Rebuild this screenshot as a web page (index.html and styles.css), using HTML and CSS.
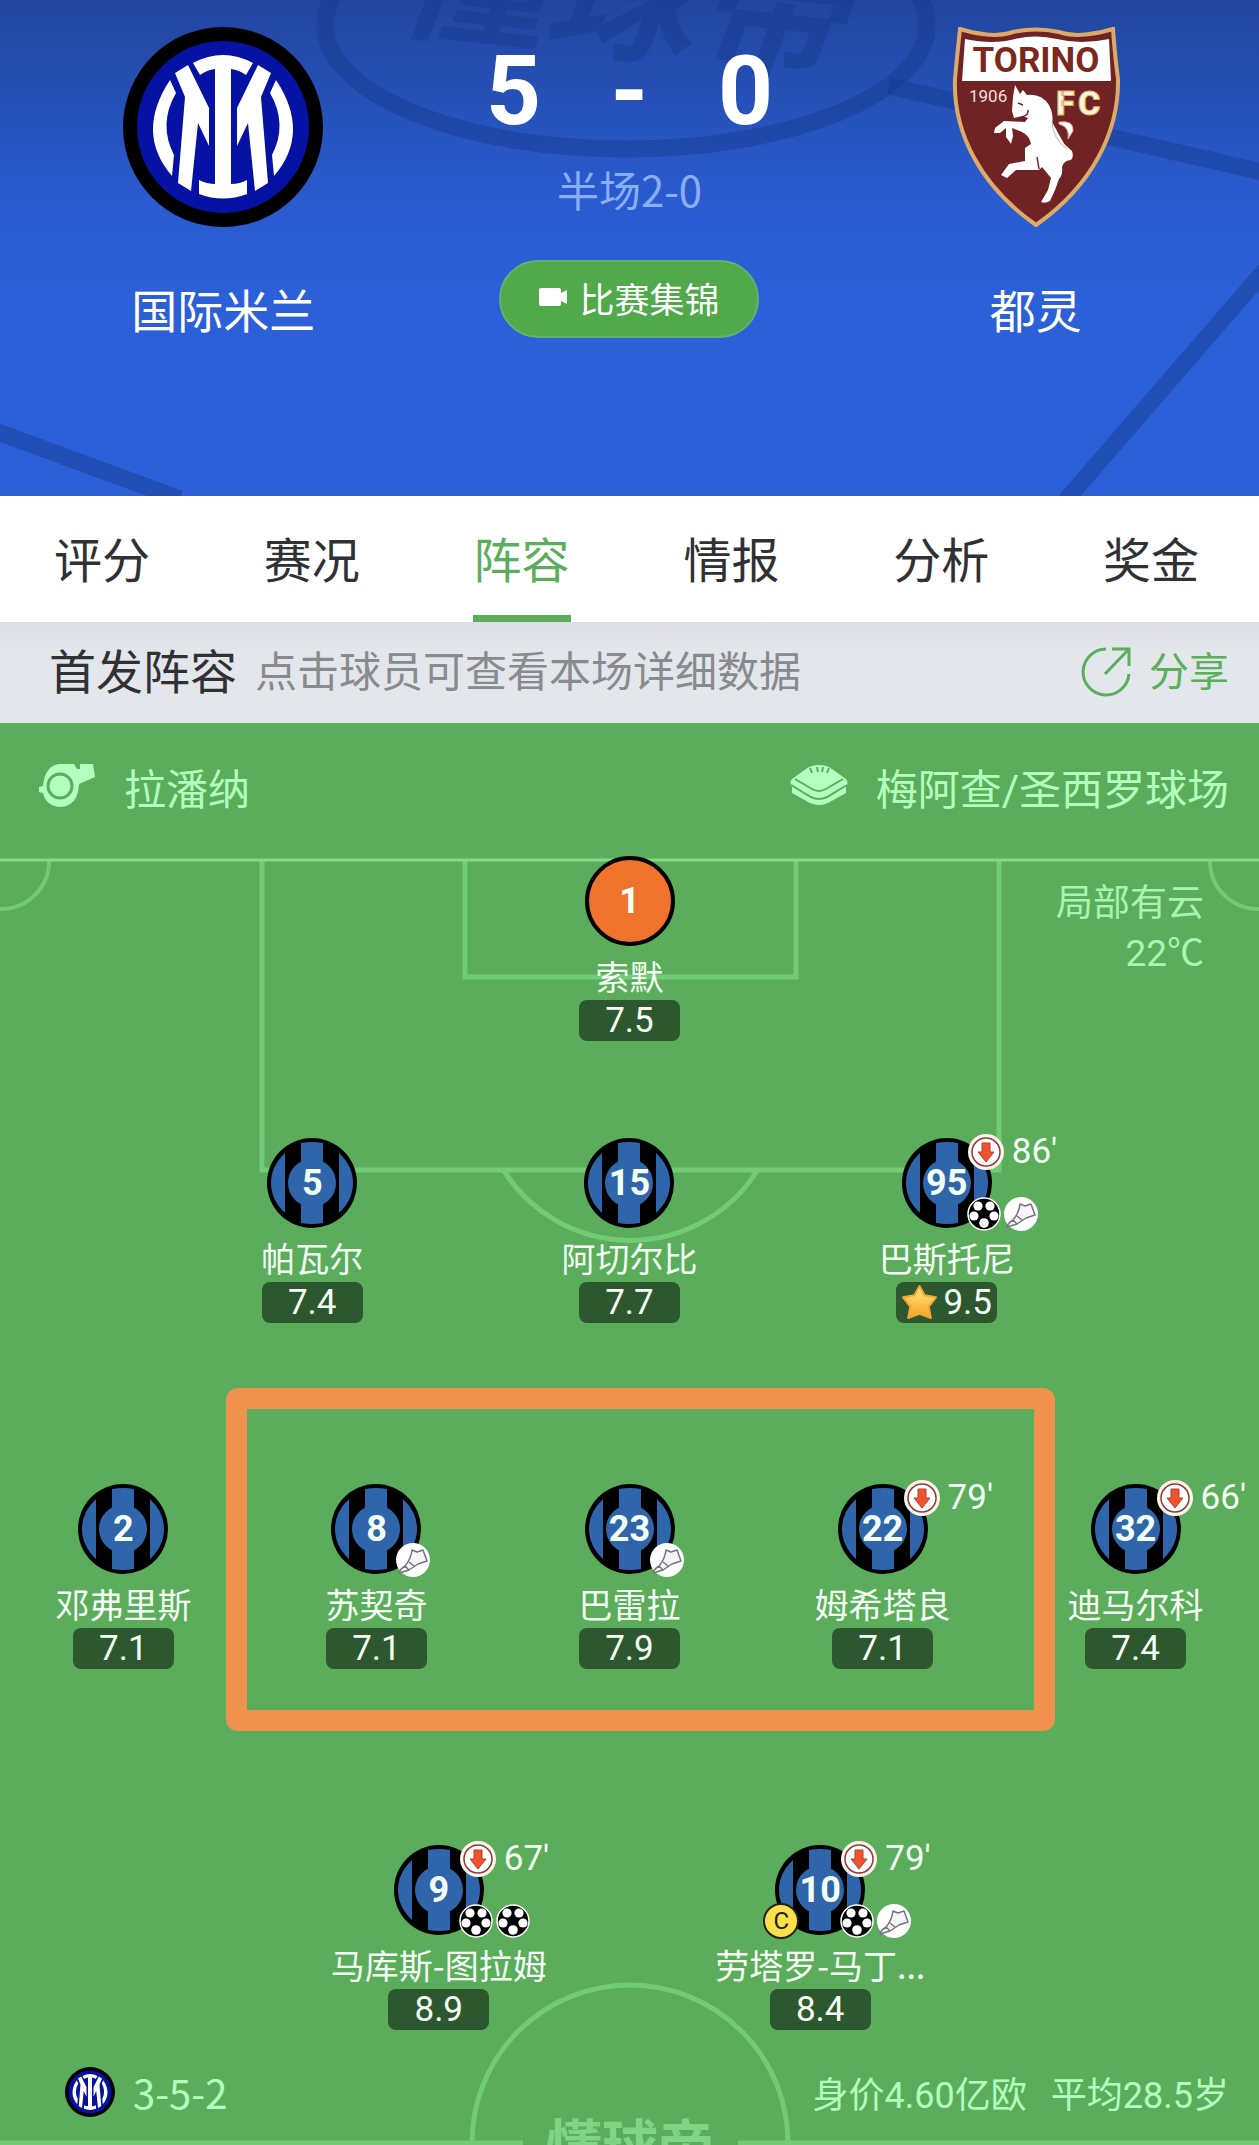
FILE: index.html
```html
<!DOCTYPE html>
<html lang="zh-CN">
<head>
<meta charset="utf-8">
<meta name="viewport" content="width=device-width, initial-scale=1">
<title>国际米兰 5 - 0 都灵</title>
<link rel="stylesheet" href="styles.css">
</head>
<body>
<svg class="sprite" aria-hidden="true">
  <symbol id="inter" viewBox="0 0 200 200">
    <circle cx="100" cy="100" r="100" fill="#000"/>
    <circle cx="100" cy="100" r="86" fill="#0512a4"/>
    <g fill="#fff">
      <path d="M70 36Q100 20 130 36L123 48Q116 43 108 42V157Q117 157 124 153V167Q100 176 76 167V153Q84 157 92 157V42Q84 43 77 48Z"/>
      <path d="M52 46L65 38L86 81V119L75 96L68 164L55 156L62 70Z"/>
      <path d="M47 53L53 66Q35 97 51 128L49 149Q12 106 47 53Z"/>
      <path d="M148 46L135 38L114 81V119L125 96L132 164L145 156L138 70Z"/>
      <path d="M153 53L147 66Q165 97 149 128L151 149Q188 106 153 53Z"/>
    </g>
  </symbol>
  <symbol id="kit" viewBox="0 0 90 90">
    <circle cx="45" cy="45" r="45" fill="#000"/>
    <path d="M18 15V75Q4 62 4 45T18 15ZM72 15V75Q86 62 86 45T72 15ZM34 5Q45 3 56 5V85Q45 87 34 85Z" fill="#2f66ab"/>
    <circle cx="45" cy="45" r="24" fill="#2f66ab"/>
  </symbol>
  <symbol id="kit-gk" viewBox="0 0 90 90">
    <circle cx="45" cy="45" r="43" fill="#f0732c" stroke="#000" stroke-width="4"/>
  </symbol>
  <symbol id="off" viewBox="0 0 36 36">
    <circle cx="18" cy="18" r="18" fill="#fff5ee"/>
    <circle cx="18" cy="18" r="14" fill="#fff" stroke="#8d3a35" stroke-width="1.5"/>
    <path d="M14 9H22V18H26L18 28L10 18H14Z" fill="#f0512f" stroke="#b5402c"/>
  </symbol>
  <symbol id="goal" viewBox="0 0 34 34">
    <circle cx="17" cy="17" r="16" fill="#000" stroke="#fff" stroke-width="1.5"/>
    <g fill="#fff">
      <circle cx="11" cy="9" r="4.6"/><circle cx="23" cy="9" r="4.6"/>
      <circle cx="7" cy="19" r="4.6"/><circle cx="27" cy="19" r="4.6"/>
      <circle cx="17" cy="26" r="4.8"/>
    </g>
  </symbol>
  <symbol id="assist" viewBox="0 0 34 34">
    <circle cx="17" cy="17" r="17" fill="#fff"/>
    <path d="M16 7L21 9L27 7L31 18L22 21L13 27L3 30Q4 26 9 23Q15 16 16 7ZM9 23L13 27M13 19L18 23" fill="#f6f6f8" stroke="#77727c" stroke-width="1.5" stroke-linejoin="round"/>
  </symbol>
</svg>

<header class="match">
  <svg class="match-bg" viewBox="0 0 1259 496" preserveAspectRatio="xMidYMin slice" aria-hidden="true">
    <g fill="none" stroke="#133a8c" stroke-opacity=".45" stroke-width="17">
      <ellipse cx="626" cy="25" rx="301" ry="124"/>
      <path d="M889 86L1262 172M1266 269L1066 500M-5 431L180 499"/>
    </g>
    <text class="match-mark" x="392" y="24" transform="rotate(6 392 24)">懂球帝</text>
  </svg>
  <div class="team">
    <svg class="crest" viewBox="0 0 200 200" role="img" aria-label="国际米兰"><use href="#inter"/></svg>
    <h2 class="team-name">国际米兰</h2>
  </div>
  <div class="result">
    <p class="score"><span>5</span><span>-</span><span>0</span></p>
    <p class="half">半场2-0</p>
    <button class="highlights" type="button">
      <svg class="camera" viewBox="0 0 28 18" aria-hidden="true"><path d="M2 0H20Q22 0 22 2V5L28 2V16L22 13V16Q22 18 20 18H2Q0 18 0 16V2Q0 0 2 0Z" fill="#fff"/></svg>
      比赛集锦
    </button>
  </div>
  <div class="team">
    <svg class="crest" viewBox="-17 0 200 200" role="img" aria-label="都灵">
      <path d="M7 2Q40 12 60 5Q83 0 106 5Q126 12 160 2Q162 30 165 52C166 104 140 158 83 198C26 158 0 104 2 52Q4 30 7 2Z" fill="#702324" stroke="#deaa68" stroke-width="4"/>
      <path d="M12 12Q40 18 62 12Q83 7 104 12Q128 18 156 12L158 54H9Z" fill="#fff"/>
      <text class="crest-name" x="83" y="45">TORINO</text>
      <text class="crest-year" x="16" y="75">1906</text>
      <text class="crest-fc" x="103" y="88">F</text>
      <text class="crest-fc" x="125" y="88">C</text>
      <path d="M60 70L62 58L67 67L70 63L74 68Q88 66 96 78Q101 88 99 97Q102 110 110 116L119 124Q121 130 118 133Q111 133 109 140Q110 148 106 152L102 163L97 174Q92 177 88 175L95 163L98 151L89 140L86 143L63 143L54 151L48 148L56 137L72 134V121L78 117Q76 108 69 105L59 101L60 109L58 117L53 110L53 101L47 106H41L42 101L51 94L72 95L75 91L69 89L61 91L59 84Z" fill="#fff"/>
      <path d="M106 95Q121 93 120 104L115 112Q117 100 106 97ZM99 95Q100 112 114 122" fill="#fff" stroke="#d9a5a0" stroke-width="1"/>
      <path d="M65 76L70 78M69 90Q76 88 75 83M84 130L86 142" fill="none" stroke="#702324" stroke-width="1.5"/>
    </svg>
    <h2 class="team-name">都灵</h2>
  </div>
</header>

<nav class="tabs">
  <a href="#rating">评分</a>
  <a href="#live">赛况</a>
  <a href="#lineup" class="active" aria-current="page">阵容</a>
  <a href="#info">情报</a>
  <a href="#analysis">分析</a>
  <a href="#bonus">奖金</a>
</nav>

<div class="lineup-bar">
  <h1>首发阵容</h1>
  <p>点击球员可查看本场详细数据</p>
  <button class="share" type="button">
    <svg viewBox="0 0 50 52" aria-hidden="true"><path d="M25 3A23 23 0 1 0 48 28M31 3H48V20M48 3L24 28" fill="none" stroke="#5bae5b" stroke-width="3"/></svg>
    分享
  </button>
</div>

<main class="field" id="lineup">
  <div class="venue">
    <svg class="whistle" viewBox="0 0 58 44" aria-hidden="true">
      <path d="M22 1H36L39 6H42V1H55L57 14L41 21Q40 43 22 44Q8 43 5 30L1 29V24L5 23Q7 2 22 1Z" fill="#b3ffbd"/>
      <circle cx="22" cy="23" r="12" fill="none" stroke="#5bad5c" stroke-width="3"/>
    </svg>
    <span>拉潘纳</span>
    <svg class="stadium" viewBox="0 0 58 40" aria-hidden="true">
      <path d="M29 0Q37 0 42 4L56 14Q59 18 56 22V28L38 38Q29 42 20 38L2 28V22Q-1 18 2 14L16 4Q21 0 29 0Z" fill="#b3ffbd"/>
      <path d="M1 20L21 32Q29 36 37 32L57 20M5 14L22 24Q29 28 36 24L53 14M20 3L22 8M27 2L28 7M33 2L32 7M39 3L37 8" fill="none" stroke="#5bad5c" stroke-width="2"/>
    </svg>
    <span>梅阿查/圣西罗球场</span>
  </div>

  <div class="pitch">
    <svg class="lines" viewBox="0 856 1259 1289" preserveAspectRatio="xMidYMin slice" aria-hidden="true">
      <g fill="none" stroke="#73cb78" stroke-width="5">
        <path d="M262 860V1170H999V860M465 860V977H796V860M504 1171A150 150 0 0 0 757 1171M0 2143H523M738 2143H1259"/>
        <circle cx="630" cy="2143" r="158"/>
        <path d="M49 860A48 48 0 0 1 0 909M1210 860A48 48 0 0 0 1259 909" stroke-width="4"/>
        <path d="M0 860H1259" stroke="#84dc88" stroke-width="3"/>
      </g>
      <text class="pitch-mark" x="630" y="2166">懂球帝</text>
    </svg>
    <p class="weather">局部有云<br>22℃</p>

    <ul class="row row-1">
      <li><button class="player" type="button">
        <span class="kit"><svg><use href="#kit-gk"/></svg><b>1</b></span>
        <span class="name">索默</span><span class="rate">7.5</span>
      </button></li>
    </ul>

    <ul class="row row-3 back">
      <li><button class="player" type="button">
        <span class="kit"><svg><use href="#kit"/></svg><b>5</b></span>
        <span class="name">帕瓦尔</span><span class="rate">7.4</span>
      </button></li>
      <li><button class="player" type="button">
        <span class="kit"><svg><use href="#kit"/></svg><b>15</b></span>
        <span class="name">阿切尔比</span><span class="rate">7.7</span>
      </button></li>
      <li><button class="player" type="button">
        <span class="kit"><svg><use href="#kit"/></svg><b>95</b>
          <span class="sub"><svg><use href="#off"/></svg>86'</span>
          <span class="events"><svg><use href="#goal"/></svg><svg><use href="#assist"/></svg></span></span>
        <span class="name">巴斯托尼</span>
        <span class="rate"><svg class="star" viewBox="0 0 36 36" aria-hidden="true"><defs><linearGradient id="gold" x2="0" y2="1"><stop stop-color="#ffe680"/><stop offset="1" stop-color="#f5a623"/></linearGradient></defs><path d="M18 2L23 11L34 13L27 22L29 33L18 29L7 33L9 22L2 13L13 11Z" fill="url(#gold)" stroke="#f0a63a" stroke-width="2" stroke-linejoin="round"/></svg>9.5</span>
      </button></li>
    </ul>

    <ul class="row row-5 middle">
      <li><button class="player" type="button">
        <span class="kit"><svg><use href="#kit"/></svg><b>2</b></span>
        <span class="name">邓弗里斯</span><span class="rate">7.1</span>
      </button></li>
      <li><button class="player" type="button">
        <span class="kit"><svg><use href="#kit"/></svg><b>8</b>
          <span class="events"><svg><use href="#assist"/></svg></span></span>
        <span class="name">苏契奇</span><span class="rate">7.1</span>
      </button></li>
      <li><button class="player" type="button">
        <span class="kit"><svg><use href="#kit"/></svg><b>23</b>
          <span class="events"><svg><use href="#assist"/></svg></span></span>
        <span class="name">巴雷拉</span><span class="rate">7.9</span>
      </button></li>
      <li><button class="player" type="button">
        <span class="kit"><svg><use href="#kit"/></svg><b>22</b>
          <span class="sub"><svg><use href="#off"/></svg>79'</span></span>
        <span class="name">姆希塔良</span><span class="rate">7.1</span>
      </button></li>
      <li><button class="player" type="button">
        <span class="kit"><svg><use href="#kit"/></svg><b>32</b>
          <span class="sub"><svg><use href="#off"/></svg>66'</span></span>
        <span class="name">迪马尔科</span><span class="rate">7.4</span>
      </button></li>
    </ul>

    <ul class="row row-2 front">
      <li><button class="player" type="button">
        <span class="kit"><svg><use href="#kit"/></svg><b>9</b>
          <span class="sub"><svg><use href="#off"/></svg>67'</span>
          <span class="events"><svg><use href="#goal"/></svg><svg><use href="#goal"/></svg></span></span>
        <span class="name">马库斯-图拉姆</span><span class="rate">8.9</span>
      </button></li>
      <li><button class="player" type="button">
        <span class="kit"><svg><use href="#kit"/></svg><b>10</b>
          <span class="sub"><svg><use href="#off"/></svg>79'</span>
          <span class="captain">C</span>
          <span class="events"><svg><use href="#goal"/></svg><svg><use href="#assist"/></svg></span></span>
        <span class="name">劳塔罗-马丁...</span><span class="rate">8.4</span>
      </button></li>
    </ul>

    <footer class="summary">
      <svg class="mini-crest" viewBox="0 0 200 200" aria-hidden="true"><use href="#inter"/></svg>
      <span class="formation">3-5-2</span>
      <span class="value">身价4.60亿欧</span>
      <span>平均28.5岁</span>
    </footer>
  </div>
</main>
</body>
</html>
```
FILE: styles.css
```css
* { box-sizing: border-box; }
body {
  margin: 0;
  font-family: Roboto, "Noto Sans CJK SC", sans-serif;
  color: #303134;
  background: #5bad5c;
}
h1, h2, p, ul { margin: 0; padding: 0; font-weight: 400; list-style: none; }
button { border: 0; padding: 0; background: none; font: inherit; color: inherit; cursor: pointer; }
a { color: inherit; text-decoration: none; }
.sprite { position: absolute; width: 0; height: 0; }

/* Match header */
.match {
  position: relative;
  display: grid;
  grid-template-columns: repeat(3, 1fr);
  padding: 27px 20px 152px;
  background: linear-gradient(#2246a0, #2a5bcf 200px, #2c60d8 290px);
  color: #fff;
  overflow: hidden;
}
.match-bg { position: absolute; inset: 0; width: 100%; height: 100%; }
.match-mark {
  font: italic 700 150px "Noto Sans CJK SC", sans-serif;
  fill: #133a8c;
  fill-opacity: .45;
}
.team, .result { position: relative; display: flex; flex-direction: column; align-items: center; }
.crest { width: 200px; height: 200px; }
.crest-name { font: 700 35px Roboto, sans-serif; fill: #7a2a1c; text-anchor: middle; }
.crest-year { font: 400 17px Roboto, sans-serif; fill: #f6dede; }
.crest-fc { font: 900 34px Roboto, sans-serif; fill: #fff3d8; stroke: #deaa68; stroke-width: 1px; }
.team-name { margin-top: 53px; font-size: 46px; line-height: 64px; }
.score {
  display: grid;
  grid-template-columns: repeat(3, 116px);
  font-size: 96px;
  font-weight: 700;
  line-height: 128px;
  text-align: center;
}
.half { font-family: "Noto Sans CJK SC", sans-serif; font-size: 42px; line-height: 68px; color: #8aaef5; }
.highlights {
  display: flex;
  align-items: center;
  justify-content: center;
  gap: 12px;
  margin-top: 37px;
  width: 260px;
  height: 78px;
  padding-bottom: 4px;
  border: 2px solid #5eb272;
  border-radius: 39px;
  background: #50aa4b;
  font-size: 35px;
}
.camera { width: 28px; height: 18px; }

/* Tabs */
.tabs { display: grid; grid-template-columns: repeat(6, 1fr); justify-items: center; background: #fff; }
.tabs a {
  width: 98px;
  height: 126px;
  margin-right: 6px;
  border-bottom: 7px solid transparent;
  font-size: 48px;
  line-height: 132px;
  text-align: center;
}
.tabs .active { color: #5bae5b; border-color: #5ead5d; }

/* Lineup heading */
.lineup-bar {
  display: flex;
  align-items: center;
  height: 101px;
  padding: 0 30px 8px 49px;
  background: linear-gradient(#dedfe5, #e3e6ea 30px);
}
.lineup-bar h1 { font-size: 47px; }
.lineup-bar p { margin-left: 18px; font-size: 42px; color: #878a8e; }
.share { display: flex; align-items: center; gap: 18px; margin-left: auto; font-size: 40px; color: #5bae5b; }
.share svg { width: 50px; height: 52px; margin-top: 6px; }

/* Field */
.venue {
  display: flex;
  align-items: center;
  height: 133px;
  padding: 0 30px 6px 38px;
  font-size: 42px;
  color: #b3ffbd;
}
.whistle { width: 58px; height: 44px; margin: -4px 28px 0 0; }
.stadium { width: 58px; height: 40px; margin: -4px 28px 0 auto; }
.pitch { position: relative; padding-bottom: 28px; overflow: hidden; }
.lines { position: absolute; inset: 0; width: 100%; height: 100%; }
.pitch-mark {
  font: 700 56px "Noto Sans CJK SC", sans-serif;
  fill: #7fd485;
  text-anchor: middle;
}
.weather {
  position: absolute;
  top: 23px;
  right: 55px;
  font-size: 37px;
  line-height: 50px;
  text-align: right;
  color: #a9f5b0;
}
.row { position: relative; display: grid; justify-content: center; justify-items: center; }
.row-1 { grid-template-columns: 100%; }
.row-2 { grid-template-columns: repeat(2, 30.3%); }
.row-3 { grid-template-columns: repeat(3, 25.2%); }
.row-5 { grid-template-columns: repeat(5, 20.1%); }
.back { margin-top: 97px; }
.middle { margin-top: 161px; }
.front { margin-top: 176px; }
/* Marker frame round the three central midfielders */
.middle::after {
  content: "";
  position: absolute;
  inset: -96px 204px -62px 226px;
  border: 21px solid #f0924e;
  border-radius: 12px;
  pointer-events: none;
}
.player { display: flex; flex-direction: column; align-items: center; color: #f4fff4; }
.kit {
  position: relative;
  display: grid;
  place-items: center;
  width: 90px;
  height: 90px;
}
.kit > svg { grid-area: 1 / 1; width: 90px; height: 90px; }
.kit b { grid-area: 1 / 1; position: relative; font-size: 36px; }
.sub {
  position: absolute;
  left: 66px;
  top: -4px;
  display: flex;
  align-items: center;
  gap: 8px;
  font-size: 35px;
  line-height: 36px;
}
.sub svg { width: 36px; height: 36px; }
.events { position: absolute; left: 65px; top: 59px; display: flex; gap: 3px; }
.events svg { width: 34px; height: 34px; }
.captain {
  position: absolute;
  left: -12px;
  top: 58px;
  width: 36px;
  height: 36px;
  border: 2px solid #222;
  border-radius: 50%;
  background: #fbe04a;
  font-size: 24px;
  line-height: 32px;
  color: #222;
}
.name {
  padding-top: 6px;
  font-family: "Noto Sans CJK SC", sans-serif;
  font-size: 34px;
  line-height: 48px;
  white-space: nowrap;
}
.rate {
  display: flex;
  align-items: center;
  justify-content: center;
  width: 101px;
  height: 41px;
  border-radius: 8px;
  background: #2d572e;
  font-size: 35px;
  line-height: 40px;
}
.star { width: 37px; height: 37px; margin-right: 5px; }
.summary {
  position: relative;
  display: flex;
  align-items: center;
  height: 50px;
  margin-top: 37px;
  padding: 0 30px 0 65px;
  font-size: 36px;
  color: #b3ffbd;
}
.mini-crest { width: 50px; height: 50px; margin-right: 18px; }
.formation { font-family: "Noto Sans CJK SC", sans-serif; font-size: 40px; line-height: 50px; }
.value { margin: 0 24px 0 auto; }
```
